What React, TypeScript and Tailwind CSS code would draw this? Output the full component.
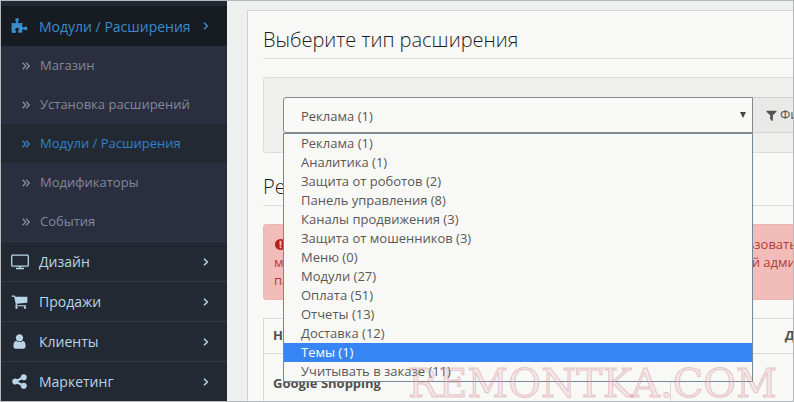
import type { ReactNode } from 'react';

const paths = {
  puzzle:
    'M1728 1098q0 81-44.5 135t-123.5 54q-41 0-77.5-17.5t-59-38-56.5-38-71-17.5q-110 0-110 124 0 39 16 115t15 115v5q-22 0-33 1-34 3-97.5 11.5t-115.5 13.5-98 5q-61 0-103-26.5t-42-83.5q0-37 17.5-71t38-56.5 38-59 17.5-77.5q0-79-54-123.5t-135-44.5q-84 0-143 45.5t-59 127.5q0 43 15 83t33.5 64.5 33.5 53 15 50.5q0 45-46 89-37 35-117 35-95 0-245-24-9-2-27.5-4t-27.5-4l-13-2q-1 0-3-1-2 0-2-1v-1024q2 1 17.5 3.5t34 5 21.5 3.5q150 24 245 24 80 0 117-35 46-44 46-89 0-22-15-50.5t-33.5-53-33.5-64.5-15-83q0-82 59-127.5t144-45.5q80 0 134 44.5t54 123.5q0 41-17.5 77.5t-38 59-38 56.5-17.5 71q0 57 42 83.5t103 26.5q64 0 180-15t163-17v2q-1 2-3.5 17.5t-5 34-3.5 21.5q-24 150-24 245 0 80 35 117 44 46 89 46 22 0 50.5-15t53-33.5 64.5-33.5 83-15q82 0 127.5 59t45.5 143z',
  cart: 'M704 1536q0 52-38 90t-90 38-90-38-38-90 38-90 90-38 90 38 38 90zm896 0q0 52-38 90t-90 38-90-38-38-90 38-90 90-38 90 38 38 90zm128-1088v512q0 24-16.5 42.5t-40.5 21.5l-1044 122q13 60 13 70 0 16-24 64h920q26 0 45 19t19 45-19 45-45 19h-1024q-26 0-45-19t-19-45q0-11 8-31.5t16-36 21.5-40 15.5-29.5l-177-823h-204q-26 0-45-19t-19-45 19-45 45-19h256q16 0 28.5 6.5t19.5 15.5 13 24.5 8 26 5.5 29.5 4.5 26h1201q26 0 45 19t19 45z',
  user: 'M1536 1399q0 109-62.5 187t-150.5 78h-854q-88 0-150.5-78t-62.5-187q0-85 8.5-160.5t31.5-152 58.5-131 94-89 134.5-34.5q131 128 313 128t313-128q76 0 134.5 34.5t94 89 58.5 131 31.5 152 8.5 160.5zm-256-887q0 159-112.5 271.5t-271.5 112.5-271.5-112.5-112.5-271.5 112.5-271.5 271.5-112.5 271.5 112.5 112.5 271.5z',
  share:
    'M1344 1024q133 0 226.5 93.5t93.5 226.5-93.5 226.5-226.5 93.5-226.5-93.5-93.5-226.5q0-12 2-34l-360-180q-92 86-218 86-133 0-226.5-93.5t-93.5-226.5 93.5-226.5 226.5-93.5q126 0 218 86l360-180q-2-22-2-34 0-133 93.5-226.5t226.5-93.5 226.5 93.5 93.5 226.5-93.5 226.5-226.5 93.5q-126 0-218-86l-360 180q2 22 2 34t-2 34l360 180q92-86 218-86z',
  filter:
    'M1595 295q17 41-14 70l-493 493v742q0 42-39 59-13 5-25 5-27 0-45-19l-256-256q-19-19-19-45v-486l-493-493q-31-29-14-70 17-39 59-39h1280q42 0 59 39z',
  warning:
    'M896 128q209 0 385.5 103t279.5 279.5 103 385.5-103 385.5-279.5 279.5-385.5 103-385.5-103-279.5-279.5-103-385.5 103-385.5 279.5-279.5 385.5-103zm128 1247v-190q0-14-9-23.5t-22-9.5h-192q-13 0-23 10t-10 23v190q0 13 10 23t23 10h192q13 0 22-9.5t9-23.5zm-2-344l18-621q0-12-10-18-10-8-24-8h-220q-14 0-24 8-10 6-10 18l17 621q0 10 10 17.5t24 7.5h185q14 0 23.5-7.5t10.5-17.5z',
};

function Glyph({ name, className }: { name: keyof typeof paths; className: string }) {
  return (
    <svg viewBox="0 0 1792 1792" fill="currentColor" aria-hidden="true" className={className}>
      <path d={paths[name]} />
    </svg>
  );
}

function Screen() {
  return (
    <svg viewBox="0 0 18 16" fill="none" stroke="currentColor" aria-hidden="true" className="h-4 w-[18px]">
      <rect x="0.7" y="1.2" width="16.6" height="11" rx="1" strokeWidth="1.3" />
      <path d="M9 12v2M5 14.5h8" strokeWidth="1.4" />
    </svg>
  );
}

function Chevron() {
  return (
    <svg viewBox="0 0 6 10" fill="none" stroke="currentColor" strokeWidth="1.5" aria-hidden="true" className="h-[10px] w-[6px]">
      <path d="M1 1.7 4.4 5 1 8.3" />
    </svg>
  );
}

function DoubleChevron() {
  return (
    <svg viewBox="0 0 8 8" fill="none" stroke="currentColor" strokeWidth="1.4" aria-hidden="true" className="h-2 w-2">
      <path d="M.7 .8 3.7 4 .7 7.2M4.2 .8 7.2 4 4.2 7.2" />
    </svg>
  );
}

function MenuItem({ icon, label, active = false }: { icon: ReactNode; label: string; active?: boolean }) {
  return (
    <li>
      <a
        href="#"
        className={
          active
            ? 'flex h-10 items-center bg-[#171b22] pr-[18px] pl-[10px] text-[14px] text-[#3a8ccb]'
            : 'flex h-10 items-center border-t border-[#303743] pr-[18px] pl-[10px] text-[14px] text-[#b9d5e6]'
        }
      >
        <span className="w-7">{icon}</span>
        <span className="flex-1">{label}</span>
        <Chevron />
      </a>
    </li>
  );
}

function SubItem({ label, active = false }: { label: string; active?: boolean }) {
  return (
    <li>
      <a
        href="#"
        className={
          active
            ? 'flex h-[39px] items-center gap-[10px] bg-[#232933] pl-[21px] text-[#2f83c6]'
            : 'flex h-[39px] items-center gap-[10px] pl-[21px] text-[#83889b]'
        }
      >
        <DoubleChevron />
        {label}
      </a>
    </li>
  );
}

const types = [
  'Реклама (1)',
  'Аналитика (1)',
  'Защита от роботов (2)',
  'Панель управления (8)',
  'Каналы продвижения (3)',
  'Защита от мошенников (3)',
  'Меню (0)',
  'Модули (27)',
  'Оплата (51)',
  'Отчеты (13)',
  'Доставка (12)',
  'Темы (1)',
  'Учитывать в заказе (11)',
];

function TypePicker() {
  return (
    <div className="relative w-[470px]">
      <label htmlFor="type" className="sr-only">
        Тип
      </label>
      <select
        id="type"
        className="block h-9 w-full appearance-none rounded-l-[3px] border border-[#85898c] bg-[#f9f9f7] px-[17px] pt-[3px] text-[13px] text-[#555]"
      >
        {types.map((t) => (
          <option key={t}>{t}</option>
        ))}
      </select>
      <svg viewBox="0 0 6 6" fill="#444" aria-hidden="true" className="pointer-events-none absolute top-[15px] right-[7px] size-[6px]">
        <path d="M0 0h6L3 6z" />
      </svg>
      <ul
        role="listbox"
        aria-label="Тип расширения"
        className="absolute top-full left-0 z-10 w-full border border-[#76899a] bg-[#f8f9f7] text-[#585858]"
      >
        {types.map((t) => (
          <li
            key={t}
            role="option"
            aria-selected={t === 'Темы (1)'}
            className={t === 'Темы (1)' ? 'bg-[#3784f4] px-[17px] leading-[19px] text-white' : 'px-[17px] leading-[19px]'}
          >
            {t}
          </li>
        ))}
      </ul>
    </div>
  );
}

function Legend({ children }: { children: ReactNode }) {
  return <h3 className="border-b border-[#dcdcdc] pb-1 text-[20px] leading-[28px] font-light text-[#1c1c1c]">{children}</h3>;
}

export default function App() {
  return (
    <div className="relative flex h-screen overflow-hidden border border-[#b5b7b9] bg-[#eeefef] font-['Open_Sans','Noto_Sans',sans-serif] text-[13px]">
      <nav className="w-[226px] shrink-0 bg-[#232933] pt-[5px]">
        <ul>
          <MenuItem active icon={<Glyph name="puzzle" className="size-[17px]" />} label="Модули / Расширения" />
          <li>
            <ul className="bg-[#2a2e3f]">
              <SubItem label="Магазин" />
              <SubItem label="Установка расширений" />
              <SubItem active label="Модули / Расширения" />
              <SubItem label="Модификаторы" />
              <SubItem label="События" />
            </ul>
          </li>
          <MenuItem icon={<Screen />} label="Дизайн" />
          <MenuItem icon={<Glyph name="cart" className="size-[17px]" />} label="Продажи" />
          <MenuItem icon={<Glyph name="user" className="size-[17px]" />} label="Клиенты" />
          <MenuItem icon={<Glyph name="share" className="size-[17px]" />} label="Маркетинг" />
        </ul>
      </nav>

      <main className="-mr-20 ml-5 mt-[9px] flex-1 border-t border-l border-[#d2d2d2] bg-[#f8f8f6] px-[15px] pt-[15px]">
        <Legend>Выберите тип расширения</Legend>
        <form className="mt-[18px] flex rounded-[3px] border border-[#dcdcdc] bg-[#efefed] p-[19px]">
          <TypePicker />
          <button
            type="button"
            className="flex h-9 items-center gap-[2px] border border-l-0 border-[#d0d0d0] bg-[#e9e9e8] px-3 whitespace-nowrap text-[#555]"
          >
            <Glyph name="filter" className="size-[13px]" />
            Фильтр
          </button>
        </form>

        <div className="mt-5">
          <Legend>Реклама</Legend>
        </div>
        <div className="mt-[18px] flex h-[76px] justify-between rounded-[3px] border border-[#eeb5b0] bg-[#f2bdb8] px-[10px] pt-[10px] leading-[18px] text-[#b13c3a]">
          <div>
            <p className="flex items-center gap-1">
              <Glyph name="warning" className="size-[13px] text-[#b51f1c]" />
              Теперь
            </p>
            <p>можно</p>
            <p>панели</p>
          </div>
          <div className="w-[141px]">
            <p>использовать</p>
            <p>и в этой админке</p>
          </div>
        </div>

        <table className="mt-[18px] w-full border-collapse text-left font-bold text-[#505050]">
          <thead>
            <tr className="h-[35px]">
              <th className="border border-[#d8d8d8] px-[9px]">Название</th>
              <th className="w-[190px] border border-[#d8d8d8] px-[9px] text-right">Действие</th>
            </tr>
          </thead>
          <tbody>
            <tr className="h-[60px]">
              <td className="border border-[#d8d8d8] px-[9px]">Google Shopping</td>
              <td className="border border-[#d8d8d8]" />
            </tr>
          </tbody>
        </table>
      </main>

      <div
        aria-hidden="true"
        className="pointer-events-none absolute right-4 bottom-[-4px] z-20 font-['DejaVu_Serif',serif] text-[40px] leading-[44px] text-[#e9b6bc]/30 [-webkit-text-stroke:1px_#c8707c55]"
      >
        REMONTKA.COM
      </div>
    </div>
  );
}
